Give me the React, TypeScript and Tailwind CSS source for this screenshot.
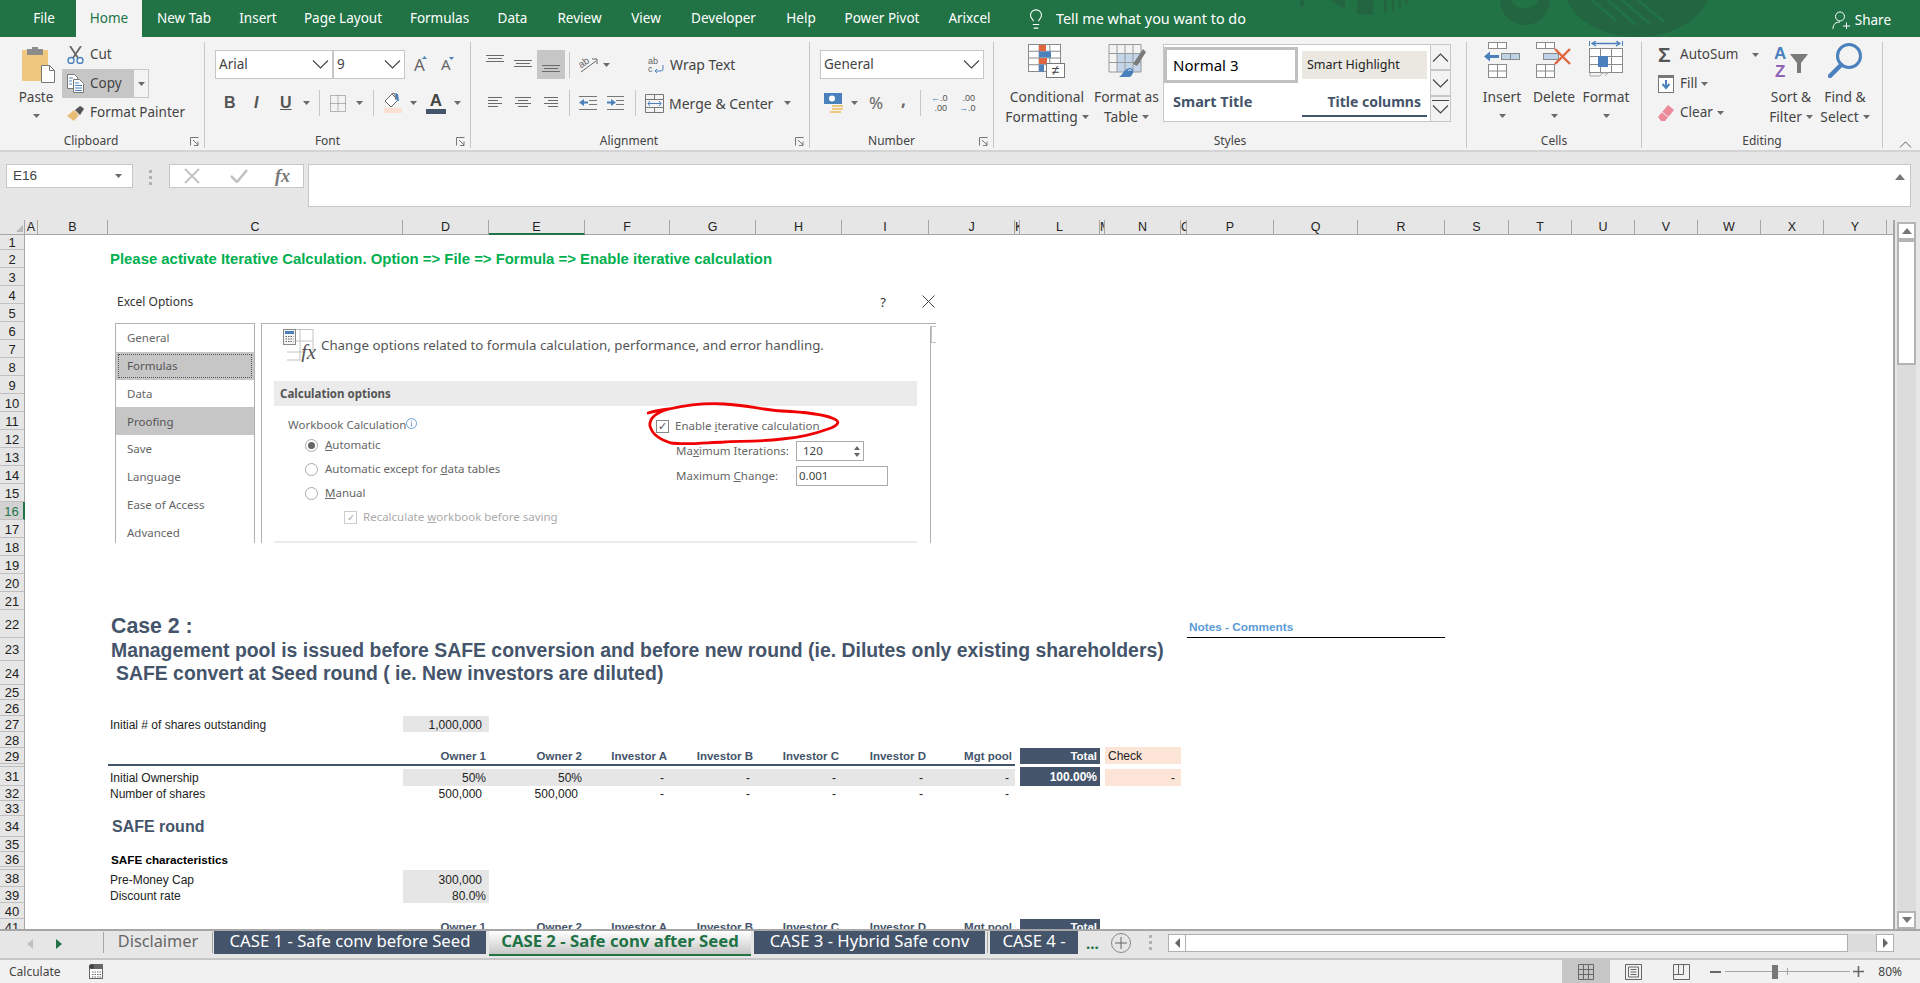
import React from "react";
import { Lightbulb } from "lucide-react";

const ui = "font-['Noto_Sans','Open_Sans',sans-serif]";
const arial = "font-['Liberation_Sans',Arial,sans-serif]";

// --- small drawing helpers

function Caret({ className = "" }: { className?: string }) {
  return (
    <svg width="7" height="4" viewBox="0 0 7 4" className={`shrink-0 ${className}`}>
      <path d="M0 0h7L3.5 4z" fill="#6a6a6a" />
    </svg>
  );
}

function Chevron({ up = false }: { up?: boolean }) {
  return (
    <svg width="17" height="9" viewBox="0 0 17 9" className="shrink-0">
      <path d={up ? "M1 8.5 8.5 1 16 8.5" : "M1 .5 8.5 8 16 .5"} fill="none" stroke="#444" strokeWidth="1.1" />
    </svg>
  );
}

function Launcher() {
  return (
    <svg width="10" height="9" viewBox="0 0 10 9" className="absolute bottom-[2px] right-[4px]">
      <path d="M.5 8.5v-8h8M3 3l5 5M8 4.5v4H4" fill="none" stroke="#777" />
    </svg>
  );
}

function Lines({ w, rows, align = "left" }: { w: number; rows: number[]; align?: string }) {
  return (
    <svg width={w} height={rows.length * 3 + 1} viewBox={`0 0 ${w} ${rows.length * 3 + 1}`} className="shrink-0">
      {rows.map((len, i) => {
        const x = align === "left" ? 0 : align === "right" ? w - len : (w - len) / 2;
        return <rect key={i} x={x} y={i * 3} width={len} height="1" fill="#6a6a6a" />;
      })}
    </svg>
  );
}

function PasteIcon() {
  return (
    <svg width="33" height="36" viewBox="0 0 33 36">
      <rect x="0" y="3" width="26" height="31" rx="1" fill="#edc87e" />
      <rect x="5" y="2" width="16" height="6" fill="#8c8c8c" />
      <rect x="10" y="0" width="6" height="4" fill="#8c8c8c" />
      <path d="M19.500 18.500h8l5 5v12h-13z" fill="#fff" stroke="#777" />
      <path d="M27.500 18.500v5h5" fill="none" stroke="#777" />
    </svg>
  );
}

function ScissorsIcon() {
  return (
    <svg width="17" height="18" viewBox="0 0 17 18">
      <path d="M3 0l8 12M14 0 6 12" stroke="#666" strokeWidth="1.800" fill="none" />
      <circle cx="4" cy="14.500" r="3" fill="none" stroke="#4a81bd" strokeWidth="1.400" />
      <circle cx="13" cy="14.500" r="3" fill="none" stroke="#4a81bd" strokeWidth="1.400" />
    </svg>
  );
}

function CopyIcon() {
  return (
    <svg width="17" height="19" viewBox="0 0 17 19">
      <path d="M.5.5h7l3 3v11H.500z" fill="#fff" stroke="#777" />
      <path d="M6.500 5.500h6l4 4v9h-10z" fill="#fff" stroke="#777" />
      <path d="M2 4h4M2 7h3M2 10h3M8 9h4M8 11.500h7M8 14h7M8 16.500h7" stroke="#4a81bd" />
    </svg>
  );
}

function BrushIcon() {
  return (
    <svg width="18" height="16" viewBox="0 0 18 16">
      <path d="M0 11 7 5l5 5-5 6z" fill="#e8bd75" />
      <path d="M8 5l5-4 2 1 2 2-4 6z" fill="#555" />
    </svg>
  );
}

function TableGrid({ x, y, w, h, cols, rows, stroke = "#8a8a8a" }: { x: number; y: number; w: number; h: number; cols: number; rows: number; stroke?: string }) {
  const parts: React.ReactNode[] = [];
  for (let i = 1; i < cols; i++) {
    parts.push(<path key={`c${i}`} d={`M${x + (w * i) / cols} ${y}v${h}`} stroke={stroke} />);
  }
  for (let i = 1; i < rows; i++) {
    parts.push(<path key={`r${i}`} d={`M${x} ${y + (h * i) / rows}h${w}`} stroke={stroke} />);
  }
  return (
    <g>
      <rect x={x} y={y} width={w} height={h} fill="#fff" stroke={stroke} />
      {parts}
    </g>
  );
}

function InsertIcon() {
  return (
    <svg width="36" height="36" viewBox="0 0 36 36">
      <TableGrid x={4.500} y={.500} w={18} h={6} cols={2} rows={1} />
      <rect x="17.500" y="11.500" width="18" height="6" fill="#bfd3e8" stroke="#8a8a8a" />
      <path d="M26.500 11.500v6" stroke="#8a8a8a" />
      <path d="M0 14.500 6 9.500v3.500h9v3H6v3.500z" fill="#4a81bd" />
      <TableGrid x={4.500} y={22.500} w={18} h={13} cols={2} rows={2} />
    </svg>
  );
}

function DeleteIcon() {
  return (
    <svg width="36" height="36" viewBox="0 0 36 36">
      <TableGrid x={.500} y={.500} w={18} h={6} cols={2} rows={1} />
      <rect x="7.500" y="11.500" width="15" height="6" fill="#bfd3e8" stroke="#8a8a8a" />
      <TableGrid x={.500} y={22.500} w={18} h={13} cols={2} rows={2} />
      <path d="M19 7l15 15M34 7 19 22" stroke="#e0663f" strokeWidth="2.400" />
    </svg>
  );
}

function FormatIcon() {
  return (
    <svg width="35" height="37" viewBox="0 0 35 37">
      <path d="M.5 0v5M33.500 0v5" stroke="#4a81bd" />
      <path d="M3 2.500h28M7 0 3 2.500 7 5M27 0l4 2.500L27 5" stroke="#4a81bd" fill="none" strokeWidth="1.300" />
      <TableGrid x={.500} y={7.500} w={33} h={24} cols={3} rows={3} />
      <rect x="9" y="15" width="10" height="11" fill="#4a81bd" />
      <path d="M1 32v3h10l2-3h6l-3 3" fill="none" stroke="#aaa" />
    </svg>
  );
}

function ConditionalIcon() {
  return (
    <svg width="38" height="34" viewBox="0 0 38 34">
      <TableGrid x={.500} y={.500} w={32} h={27} cols={3} rows={4} />
      <rect x="11" y="1" width="7" height="6" fill="#e0663f" />
      <rect x="11" y="7.500" width="12" height="6" fill="#4a81bd" />
      <rect x="11" y="14" width="8" height="6" fill="#e0663f" />
      <rect x="11" y="20.500" width="5" height="7" fill="#4a81bd" />
      <rect x="18.500" y="19.500" width="18" height="14" fill="#fff" stroke="#777" />
      <text x="27.500" y="31" textAnchor="middle" fontSize="14" fill="#444" fontFamily="Liberation Sans">≠</text>
    </svg>
  );
}

function FormatTableIcon() {
  return (
    <svg width="38" height="34" viewBox="0 0 38 34">
      <rect x="9" y="9" width="24" height="19" fill="#c3d5e9" />
      <path d="M1 .5h32v27.500H1zM9 .5v27.500M17 .5v27.500M25 .5v27.500M1 9.500h32M1 18.500h32" fill="none" stroke="#9a9a9a" />
      <path d="M25 20 35 5l3 3-9 14z" fill="#7a7a7a" />
      <path d="M11 33c3-1 5-8 10-9 3 0 5 2 4 5-1 2-2 4-4 4z" fill="#4a81bd" />
      <path d="M20 27c1-2 3-2 3 0" fill="none" stroke="#fff" />
    </svg>
  );
}

function SortIcon() {
  return (
    <svg width="35" height="33" viewBox="0 0 35 33">
      <text x="0" y="14" fontSize="17" fontWeight="700" fill="#4a81bd" fontFamily="Liberation Sans">A</text>
      <text x="1" y="32" fontSize="17" fontWeight="700" fill="#8e62b5" fontFamily="Liberation Sans">Z</text>
      <path d="M16 9h18l-7 9v10h-4V18z" fill="#7a7a7a" />
    </svg>
  );
}

function FindIcon() {
  return (
    <svg width="35" height="35" viewBox="0 0 35 35">
      <circle cx="21" cy="13" r="11.500" fill="none" stroke="#4a81bd" strokeWidth="3" />
      <path d="M13 22 2 33" stroke="#4a81bd" strokeWidth="4.500" strokeLinecap="round" />
    </svg>
  );
}

function CalcIcon() {
  return (
    <svg width="33" height="33" viewBox="0 0 33 33">
      <path d="M4 .5h26M4 12h26M4 23h18M4 31h14M17 0v31M30 0v22" stroke="#c4c4c4" fill="none" />
      <rect x=".5" y=".5" width="12" height="15" fill="#f4f4f4" stroke="#888" />
      <rect x="2" y="2" width="9" height="3" fill="#4a81bd" />
      <path d="M2.500 7.500h8M2.500 10h8M2.500 12.500h8" stroke="#666" strokeDasharray="1.500 1" />
      <text x="18" y="30" fontSize="21" fontStyle="italic" fill="#555" fontFamily="Liberation Serif">fx</text>
    </svg>
  );
}

function ValueDash() {
  return <span className="pr-[6px]">-</span>;
}

// --- data

const menuTabs = [
  { label: "File", w: "w-[64px] ml-[12px]" },
  { label: "Home", w: "w-[66px]", active: true },
  { label: "New Tab", w: "w-[84px]" },
  { label: "Insert", w: "w-[64px]" },
  { label: "Page Layout", w: "w-[106px]" },
  { label: "Formulas", w: "w-[87px]" },
  { label: "Data", w: "w-[59px]" },
  { label: "Review", w: "w-[75px]" },
  { label: "View", w: "w-[58px]" },
  { label: "Developer", w: "w-[97px]" },
  { label: "Help", w: "w-[58px]" },
  { label: "Power Pivot", w: "w-[104px]" },
  { label: "Arixcel", w: "w-[71px]" },
];

const columns = [
  { l: "A", c: "col-start-2" },
  { l: "B", c: "col-start-3" },
  { l: "C", c: "col-start-4" },
  { l: "D", c: "col-start-5" },
  { l: "E", c: "col-start-6 bg-[#d2d2d2] border-b-2 border-b-[#217346]" },
  { l: "F", c: "col-start-7" },
  { l: "G", c: "col-start-8" },
  { l: "H", c: "col-start-9" },
  { l: "I", c: "col-start-10" },
  { l: "J", c: "col-start-11" },
  { l: "K", c: "col-start-12 justify-start" },
  { l: "L", c: "col-start-13" },
  { l: "M", c: "col-start-14 justify-start" },
  { l: "N", c: "col-start-15" },
  { l: "O", c: "col-start-16 justify-start" },
  { l: "P", c: "col-start-17" },
  { l: "Q", c: "col-start-18" },
  { l: "R", c: "col-start-19" },
  { l: "S", c: "col-start-20" },
  { l: "T", c: "col-start-21" },
  { l: "U", c: "col-start-22" },
  { l: "V", c: "col-start-23" },
  { l: "W", c: "col-start-24" },
  { l: "X", c: "col-start-25" },
  { l: "Y", c: "col-start-26" },
];

const rowCount = 41;

const headerCols = [
  { t: "Owner 1", c: "col-start-5" },
  { t: "Owner 2", c: "col-start-6" },
  { t: "Investor A", c: "col-start-7" },
  { t: "Investor B", c: "col-start-8" },
  { t: "Investor C", c: "col-start-9" },
  { t: "Investor D", c: "col-start-10" },
  { t: "Mgt pool", c: "col-start-11" },
];

const dashCols = ["col-start-7", "col-start-8", "col-start-9", "col-start-10", "col-start-11"];

const navItems = [
  { t: "General" },
  { t: "Formulas", focus: true },
  { t: "Data" },
  { t: "Proofing", hover: true },
  { t: "Save" },
  { t: "Language" },
  { t: "Ease of Access" },
  { t: "Advanced" },
];

// --- top parts

function TitleBar() {
  return (
    <div className="relative h-[37px] shrink-0 overflow-hidden bg-[#217346] text-[13.5px] text-white">
      <svg width="520" height="37" viewBox="0 0 520 37" className="absolute right-[100px] top-0">
        <g fill="#236541">
          <path d="M30 0l15 9V0zM57 0h16v15l-16-1zM84 0h3v13h-3zM92 0h2v11h-2zM99 0h2v8h-2zM105 0h3v4h-3zM0 0h4v7H0z" />
          <path fillRule="evenodd" d="M200 0a25 25 0 0 0 50 0h-12a13 8 0 0 1-26 0z" />
          <path d="M267 0c8 20 35 37 70 37s62-17 71-37z" />
        </g>
        <path d="M292 0l24 21M308 0l28 25M322 0l28 24M338 0l26 22" stroke="#217346" strokeWidth="2.500" />
      </svg>
      <div className="relative flex h-full items-stretch">
        {menuTabs.map((t) => (
          <div
            key={t.label}
            className={`flex items-center justify-center ${t.w} ${t.active ? "bg-[#f3f3f3] text-[#217346]" : ""}`}
          >
            {t.label}
          </div>
        ))}
        <Lightbulb className="ml-[20px] mt-[8px] h-[22px] w-[22px]" strokeWidth={1.200} />
        <span className="ml-[9px] flex items-center text-[14.4px]">Tell me what you want to do</span>
        <div className="ml-auto mr-[29px] flex items-center gap-[5px] pt-[3px]">
          <svg width="18" height="18" viewBox="0 0 18 18">
            <circle cx="8" cy="5.500" r="4.500" fill="none" stroke="#fff" />
            <path d="M1 18c0-5 3-7 7-7M11 15h7M14.500 11.500v7" fill="none" stroke="#fff" />
          </svg>
          <span>Share</span>
        </div>
      </div>
    </div>
  );
}

function RibbonGroup({ label, w, labelPad = "", launcher = false, children }: { label: string; w: string; labelPad?: string; launcher?: boolean; children: React.ReactNode }) {
  return (
    <div className={`relative flex h-[106px] shrink-0 flex-col border-r border-[#c6c6c6] ${w}`}>
      <div className="flex-1">{children}</div>
      <div className={`h-[14px] text-center text-[12px] leading-[14px] text-[#444] ${labelPad}`}>{label}</div>
      {launcher && <Launcher />}
    </div>
  );
}

function BigButton({ lines, w, icon, stack = false }: { lines: string[]; w: string; icon: React.ReactNode; stack?: boolean }) {
  return (
    <div className={`flex flex-col items-center text-[13.8px] ${w}`}>
      <div className="flex h-[40px] items-end justify-center pb-[4px]">{icon}</div>
      <div className="mt-[5px] flex h-[20px] items-center whitespace-nowrap leading-[20px]">{lines[0]}</div>
      {stack ? (
        <div className="flex h-[18px] items-center">
          <Caret />
        </div>
      ) : (
        <div className="flex h-[20px] items-center gap-[4px] whitespace-nowrap leading-[20px]">
          {lines[1]}
          <Caret />
        </div>
      )}
    </div>
  );
}

function Select({ value, w }: { value: string; w: string }) {
  return (
    <div className={`flex h-[29px] items-center justify-between border border-[#c6c6c6] bg-white pl-[3px] pr-[3px] text-[13.5px] ${w}`}>
      <span>{value}</span>
      <Chevron />
    </div>
  );
}

function Ribbon() {
  return (
    <div className={`flex h-[115px] shrink-0 items-start border-b-2 border-[#d4d4d4] bg-[#f3f3f3] pt-[5px] text-[13.5px] text-[#444]`}>
      <RibbonGroup label="Clipboard" w="w-[205px]" launcher labelPad="pr-[22px]">
        <div className="flex">
          <div className="ml-[22px] flex w-[33px] flex-col items-center pt-[5px]">
            <PasteIcon />
            <div className="mr-[5px] mt-[5px] leading-[18px]">Paste</div>
            <Caret className="mr-[5px] mt-[8px]" />
          </div>
          <div className="-mt-[2px] ml-[7px] flex flex-col">
            <div className="flex h-[29px] items-center pl-[5px]">
              <ScissorsIcon />
              <span className="ml-[6px]">Cut</span>
            </div>
            <div className="flex h-[29px]">
              <div className="flex w-[72px] items-center bg-[#c6c6c6] pl-[5px]">
                <CopyIcon />
                <span className="ml-[6px]">Copy</span>
              </div>
              <div className="flex w-[15px] items-center justify-center border border-l-0 border-[#c6c6c6]">
                <Caret />
              </div>
            </div>
            <div className="flex h-[29px] items-center pl-[5px]">
              <BrushIcon />
              <span className="ml-[5px] whitespace-nowrap">Format Painter</span>
            </div>
          </div>
        </div>
      </RibbonGroup>

      <RibbonGroup label="Font" w="w-[266px]" launcher labelPad="pr-[20px]">
        <div className="ml-[10px] mt-[8px] flex items-center">
          <Select value="Arial" w="w-[118px]" />
          <Select value="9" w="w-[72px]" />
          <div className="ml-[9px] flex w-[15px] items-start text-[17px] leading-none text-[#666]">
            A<svg width="5" height="3" viewBox="0 0 5 3" className="-ml-[3px] shrink-0"><path d="M2.500 0 5 3H0z" fill="#4a81bd" /></svg>
          </div>
          <div className="ml-[12px] flex w-[14px] items-start text-[15px] leading-none text-[#666]">
            A<svg width="5" height="3" viewBox="0 0 5 3" className="-ml-[2px] shrink-0"><path d="M0 0h5L2.500 3z" fill="#4a81bd" /></svg>
          </div>
        </div>
        <div className={`ml-[10px] mt-[9px] flex h-[30px] items-center text-[16px] text-[#555] ${arial}`}>
          <b className="ml-[9px] w-[10px]">B</b>
          <i className="ml-[20px] w-[8px] font-bold">I</i>
          <u className="ml-[18px] w-[10px] font-bold">U</u>
          <Caret className="ml-[13px]" />
          <div className="ml-[9px] h-[26px] w-px bg-[#c6c6c6]" />
          <svg width="16" height="17" viewBox="0 0 16 17" className="ml-[10px] shrink-0">
            <path d="M.5.5h15v16H.5zM8 .5v16M.5 8.500h15" fill="none" stroke="#777" strokeDasharray="1 1" />
          </svg>
          <Caret className="ml-[10px]" />
          <div className="ml-[10px] h-[26px] w-px bg-[#c6c6c6]" />
          <svg width="18" height="20" viewBox="0 0 18 20" className="ml-[10px] shrink-0">
            <path d="M8 1 1 8l6 6 7-7zM8 1l2-1 1 2 1 5" fill="#fff" stroke="#666" />
            <path d="M11 0l3 1 1 7h-2z" fill="#4a81bd" />
            <rect x="0" y="15" width="18" height="5" fill="#fbe0d3" />
          </svg>
          <Caret className="ml-[8px]" />
          <div className="ml-[9px] flex w-[20px] flex-col items-center">
            <b className="text-[17px] leading-[15px] text-[#444]">A</b>
            <div className="mt-[1px] h-[5px] w-[20px] bg-[#44546a]" />
          </div>
          <Caret className="ml-[8px]" />
        </div>
      </RibbonGroup>

      <RibbonGroup label="Alignment" w="w-[339px]" launcher labelPad="pr-[22px]">
        <div className="mt-[8px] flex h-[29px] items-center">
          <div className="ml-[15px] self-start pt-[5px]"><Lines w={18} rows={[18, 14, 18]} align="center" /></div>
          <div className="ml-[10px]"><Lines w={18} rows={[18, 14, 18]} align="center" /></div>
          <div className="ml-[5px] flex h-[29px] w-[28px] items-end justify-center bg-[#c6c6c6] pb-[4px]"><Lines w={18} rows={[18, 14, 18]} align="center" /></div>
          <div className="ml-[4px] h-[26px] w-px bg-[#c6c6c6]" />
          <svg width="19" height="17" viewBox="0 0 19 17" className="ml-[9px] shrink-0">
            <text x="0" y="10" fontSize="10" fill="#666" fontFamily="Liberation Sans" transform="rotate(-35 5 8)">ab</text>
            <path d="M2 16 17 5M13 3h5v5" stroke="#666" fill="none" />
          </svg>
          <Caret className="ml-[5px]" />
          <svg width="17" height="16" viewBox="0 0 17 16" className="ml-[38px] shrink-0">
            <text x="0" y="7" fontSize="9" fill="#666" fontFamily="Liberation Sans">ab</text>
            <text x="0" y="15" fontSize="9" fill="#666" fontFamily="Liberation Sans">c</text>
            <path d="M15 8v4a2 2 0 0 1-2 2H7M9 12l-2 2 2 2" fill="none" stroke="#4a81bd" />
          </svg>
          <span className="ml-[5px] whitespace-nowrap text-[14px]">Wrap Text</span>
        </div>
        <div className="mt-[9px] flex h-[30px] items-center">
          <div className="ml-[17px]"><Lines w={14} rows={[14, 10, 14, 10]} /></div>
          <div className="ml-[13px]"><Lines w={16} rows={[16, 10, 16, 10]} align="center" /></div>
          <div className="ml-[13px]"><Lines w={14} rows={[14, 10, 14, 10]} align="right" /></div>
          <div className="ml-[11px] h-[26px] w-px bg-[#c6c6c6]" />
          <svg width="18" height="14" viewBox="0 0 18 14" className="ml-[9px] shrink-0">
            <path d="M0 .5h18M10 4.500h8M10 8.500h8M0 13.500h18" stroke="#777" />
            <path d="M0 6.500 5 3v2.500h4v2H5V10z" fill="#4a81bd" />
          </svg>
          <svg width="17" height="14" viewBox="0 0 17 14" className="ml-[10px] shrink-0">
            <path d="M0 .5h17M9 4.500h8M9 8.500h8M0 13.500h17" stroke="#777" />
            <path d="M9 6.500 4 3v2.500H0v2h4V10z" fill="#4a81bd" />
          </svg>
          <div className="ml-[11px] h-[26px] w-px bg-[#c6c6c6]" />
          <svg width="19" height="19" viewBox="0 0 19 19" className="ml-[9px] shrink-0">
            <path d="M.5.5h18v18H.5zM.5 5.500h18M.5 13.500h18M9.500.5v5M9.500 13.500v5" fill="none" stroke="#777" />
            <path d="M3 9.500h13M5 7 3 9.500 5 12M14 7l2 2.500-2 2.500" fill="none" stroke="#4a81bd" />
          </svg>
          <span className="ml-[5px] w-[112px] whitespace-nowrap text-[14px]">Merge &amp; Center</span>
          <Caret className="ml-[3px]" />
        </div>
      </RibbonGroup>

      <RibbonGroup label="Number" w="w-[184px]" launcher labelPad="pr-[20px]">
        <div className="ml-[10px] mt-[8px] flex">
          <Select value="General" w="w-[164px]" />
        </div>
        <div className="mt-[9px] flex h-[30px] items-center">
          <svg width="20" height="20" viewBox="0 0 20 20" className="ml-[14px] shrink-0">
            <rect x="0" y="0" width="18" height="11" fill="#4a81bd" />
            <circle cx="8" cy="5.500" r="3" fill="#fff" />
            <path d="M8 12h11v2H8zM8 15h11v2H8zM6 18h11v2H6z" fill="#edc87e" />
          </svg>
          <Caret className="ml-[7px]" />
          <span className="ml-[11px] w-[16px] text-[17px] text-[#666]">%</span>
          <b className="ml-[16px] -mt-[8px] w-[4px] text-[17px] leading-[15px] text-[#666]">,</b>
          <div className="ml-[15px] h-[26px] w-px bg-[#c6c6c6]" />
          <div className={`ml-[10px] flex w-[16px] flex-col text-right text-[9px] leading-[10px] text-[#555] ${arial}`}>
            <span><span className="text-[#4a81bd]">←</span>.0</span>
            <span>.00</span>
          </div>
          <div className={`ml-[12px] flex w-[16px] flex-col text-right text-[9px] leading-[10px] text-[#555] ${arial}`}>
            <span>.00</span>
            <span><span className="text-[#4a81bd]">→</span>.0</span>
          </div>
        </div>
      </RibbonGroup>

      <RibbonGroup label="Styles" w="w-[473px]">
        <div className="flex">
          <div className="ml-[8px] flex">
            <BigButton lines={["Conditional", "Formatting"]} w="w-[90px]" icon={<ConditionalIcon />} />
            <BigButton lines={["Format as", "Table"]} w="w-[69px]" icon={<FormatTableIcon />} />
          </div>
          <div className="ml-[2px] mt-[2px] flex h-[78px]">
            <div className="w-[268px] border border-[#c6c6c6] bg-white">
              <div className="flex h-[38px] pt-[2px]">
                <div className="flex h-[36px] w-[134px] items-center border-[3px] border-[#c0c0c0] bg-white pl-[6px] text-[15px] text-black">Normal 3</div>
                <div className="ml-[4px] mt-[4px] flex h-[28px] w-[125px] items-center bg-[#ebe8e1] pl-[5px] text-[12.5px] text-[#222]">Smart Highlight</div>
              </div>
              <div className="flex h-[38px] items-center font-bold text-[#44546a]">
                <div className="w-[138px] pl-[9px] text-[14.5px]">Smart Title</div>
                <div className="flex h-[30px] w-[125px] items-center justify-end border-b-2 border-[#44546a] pr-[6px] text-[14px]">Title columns</div>
              </div>
            </div>
            <div className="flex w-[20px] flex-col border border-l-0 border-[#c6c6c6] bg-[#f3f3f3]">
              <div className="flex h-[26px] items-center justify-center border-b-2 border-[#c6c6c6]"><Chevron up /></div>
              <div className="flex h-[24px] items-center justify-center"><Chevron /></div>
              <div className="flex flex-1 flex-col items-center gap-[4px] border-t-2 border-[#c6c6c6] pt-[3px]">
                <div className="h-px w-[17px] bg-[#444]" />
                <Chevron />
              </div>
            </div>
          </div>
        </div>
      </RibbonGroup>

      <RibbonGroup label="Cells" w="w-[175px]">
        <div className="ml-[9px] flex">
          <BigButton lines={["Insert"]} w="w-[52px]" icon={<InsertIcon />} stack />
          <BigButton lines={["Delete"]} w="w-[52px]" icon={<DeleteIcon />} stack />
          <BigButton lines={["Format"]} w="w-[52px]" icon={<FormatIcon />} stack />
        </div>
      </RibbonGroup>

      <RibbonGroup label="Editing" w="w-[241px]">
        <div className="flex">
          <div className="-mt-[2px] ml-[16px] flex w-[106px] flex-col">
            <div className="flex h-[29px] items-center">
              <span className={`w-[22px] text-[21px] font-bold leading-none text-[#555] ${arial}`}>Σ</span>
              <span>AutoSum</span>
              <Caret className="ml-[14px]" />
            </div>
            <div className="flex h-[29px] items-center">
              <svg width="16" height="18" viewBox="0 0 16 18" className="mr-[6px] shrink-0">
                <rect x=".5" y=".5" width="15" height="17" fill="#fff" stroke="#777" />
                <rect x="0" y="0" width="16" height="3" fill="#777" />
                <path d="M8 5v7M4.500 9 8 13l3.500-4" fill="none" stroke="#4a81bd" strokeWidth="2" />
              </svg>
              <span>Fill</span>
              <Caret className="ml-[4px]" />
            </div>
            <div className="flex h-[29px] items-center">
              <svg width="16" height="16" viewBox="0 0 16 16" className="mr-[6px] shrink-0">
                <path d="M10 0l6 5-9 11H3l-3-4z" fill="#ec8a9a" />
                <path d="M4 7l6 5" stroke="#f3f3f3" />
              </svg>
              <span>Clear</span>
              <Caret className="ml-[4px]" />
            </div>
          </div>
          <BigButton lines={["Sort &", "Filter"]} w="w-[54px]" icon={<SortIcon />} />
          <BigButton lines={["Find &", "Select"]} w="w-[54px]" icon={<FindIcon />} />
        </div>
      </RibbonGroup>

      <div className="ml-[14px] mt-[98px] scale-75"><Chevron up /></div>
    </div>
  );
}

function FormulaBar() {
  return (
    <div className="flex h-[68px] shrink-0 items-start bg-[#e6e6e6] pt-[12px] text-[13.5px] text-[#444]">
      <div className={`ml-[6px] flex h-[24px] w-[127px] items-center justify-between border border-[#c6c6c6] bg-white pl-[6px] pr-[10px] ${arial}`}>
        <span>E16</span>
        <Caret />
      </div>
      <div className="ml-[16px] mt-[6px] flex flex-col gap-[3px]">
        <div className="h-[3px] w-[3px] bg-[#b0b0b0]" />
        <div className="h-[3px] w-[3px] bg-[#b0b0b0]" />
        <div className="h-[3px] w-[3px] bg-[#b0b0b0]" />
      </div>
      <div className="ml-[17px] flex h-[24px] w-[135px] items-center border border-[#c6c6c6] bg-white">
        <svg width="16" height="16" viewBox="0 0 16 16" className="ml-[14px]">
          <path d="M1 1l14 14M15 1 1 15" stroke="#c2c2c2" strokeWidth="1.800" />
        </svg>
        <svg width="18" height="14" viewBox="0 0 18 14" className="ml-[30px]">
          <path d="M1 7l6 6L17 1" fill="none" stroke="#c2c2c2" strokeWidth="2.600" />
        </svg>
        <span className="ml-[27px] font-['Liberation_Serif',serif] text-[18px] font-bold italic text-[#777]">fx</span>
      </div>
      <div className="relative ml-[4px] h-[43px] w-[1603px] border border-[#c6c6c6] bg-white">
        <svg width="10" height="6" viewBox="0 0 10 6" className="absolute right-[5px] top-[9px]">
          <path d="M5 0l5 6H0z" fill="#777" />
        </svg>
      </div>
    </div>
  );
}

// --- sheet

function ExcelOptionsPicture() {
  return (
    <div className={`absolute left-[115px] top-[71px] w-[821px] text-[11.5px] text-[#666] ${ui}`}>
      <div className="flex h-[32px] items-start pt-[2px] text-[#333]">
        <span className="ml-[2px] text-[12px]">Excel Options</span>
        <span className="ml-auto text-[13px]">?</span>
        <svg width="13" height="13" viewBox="0 0 13 13" className="ml-[36px] mr-[1px] mt-[2px]">
          <path d="M.5.5l12 12M12.500.5l-12 12" stroke="#444" />
        </svg>
      </div>
      <div className="flex h-[220px] gap-[6px]">
        <div className="h-full w-[140px] border-x border-t border-[#b0b0b0] bg-white">
          {navItems.map((n) => (
            <div
              key={n.t}
              className={`flex h-[27.800px] items-center pl-[11px] ${n.hover ? "bg-[#c6c6c6] text-[#555]" : ""} ${n.focus ? "bg-[#c6c6c6] text-[#555] outline-1 -outline-offset-3 outline-dotted outline-[#555]" : ""}`}
            >
              {n.t}
            </div>
          ))}
        </div>
        <div className="relative flex h-full flex-1 flex-col border-l border-t border-[#b0b0b0] bg-white">
          <div className="absolute bottom-0 right-[5px] top-[2px] w-px bg-[#b0b0b0]" />
          <div className="absolute right-0 top-[2px] h-[17px] w-[5px] border border-r-0 border-[#c6c6c6]" />
          <div className="ml-[21px] mt-[5px] flex h-[33px] items-center">
            <CalcIcon />
            <span className="ml-[5px] text-[13.3px] text-[#555]">Change options related to formula calculation, performance, and error handling.</span>
          </div>
          <div className="ml-[12px] mt-[19px] flex h-[25px] w-[643px] items-center bg-[#ebebeb] pl-[6px] font-bold text-[#555]">Calculation options</div>
          <div className="relative flex flex-1">
            <div className="ml-[26px] mt-[11px] w-[368px]">
              <div className="flex h-[16px] items-center">
                Workbook Calculation
                <svg width="11" height="11" viewBox="0 0 11 11" className="mb-[4px]">
                  <circle cx="5.500" cy="5.500" r="5" fill="none" stroke="#6ea3d8" />
                  <path d="M5.500 4.500v4M5.500 2.500v1" stroke="#6ea3d8" />
                </svg>
              </div>
              <div className="ml-[17px] flex h-[24px] items-center gap-[7px]">
                <div className="flex h-[13px] w-[13px] items-center justify-center rounded-full border border-[#aaa]">
                  <div className="h-[7px] w-[7px] rounded-full bg-[#666]" />
                </div>
                <span><u>A</u>utomatic</span>
              </div>
              <div className="ml-[17px] flex h-[24px] items-center gap-[7px]">
                <div className="h-[13px] w-[13px] rounded-full border border-[#aaa]" />
                <span>Automatic except for <u>d</u>ata tables</span>
              </div>
              <div className="ml-[17px] flex h-[24px] items-center gap-[7px]">
                <div className="h-[13px] w-[13px] rounded-full border border-[#aaa]" />
                <span><u>M</u>anual</span>
              </div>
              <div className="ml-[56px] flex h-[24px] items-center gap-[6px] text-[#aaa]">
                <div className="flex h-[13px] w-[13px] items-center justify-center border border-[#ccc] text-[10px] text-[#aaa]">✓</div>
                <span>Recalculate <u>w</u>orkbook before saving</span>
              </div>
            </div>
            <div className="mt-[11px]">
              <div className="flex h-[18px] items-center gap-[6px]">
                <div className="flex h-[13px] w-[13px] items-center justify-center border border-[#888] text-[11px] text-[#555]">✓</div>
                <span>Enable <u>i</u>terative calculation</span>
              </div>
              <div className="ml-[20px] mt-[6px] flex h-[20px] items-center">
                <span className="w-[120px]">Ma<u>x</u>imum Iterations:</span>
                <div className="flex h-[20px] w-[68px] items-center justify-between border border-[#aaa] pl-[6px] pr-[3px] text-[#444]">
                  120
                  <div className="flex flex-col gap-[3px]">
                    <svg width="6" height="4" viewBox="0 0 6 4"><path d="M3 0l3 4H0z" fill="#666" /></svg>
                    <svg width="6" height="4" viewBox="0 0 6 4"><path d="M0 0h6L3 4z" fill="#666" /></svg>
                  </div>
                </div>
              </div>
              <div className="ml-[20px] mt-[5px] flex h-[20px] items-center">
                <span className="w-[120px]">Maximum <u>C</u>hange:</span>
                <div className="flex h-[20px] w-[92px] items-center border border-[#aaa] pl-[2px] text-[#444]">0.001</div>
              </div>
            </div>
          </div>
          <div className="ml-[12px] h-[2px] w-[643px] bg-[#ebebeb]" />
          <svg width="200" height="44" viewBox="0 0 200 44" className="absolute left-[385px] top-[78px]" fill="none">
            <path
              d="M1 11 C8 9 14 8 22 7 C40 3 60 1 77 2 C100 3 115 8 135 9 C155 10 175 12 185 16 C193 19 193 22 184 26 C165 33 150 36 135 37 C110 40 90 39 77 40 C55 41 38 43 24 41 C14 38 5 32 3 24 C2 17 8 11 22 7"
              stroke="#f00000"
              strokeWidth="2.800"
              strokeLinecap="round"
            />
          </svg>
        </div>
      </div>
    </div>
  );
}

function Sheet() {
  const label = `flex items-center whitespace-nowrap text-[12px] text-[#222] ${arial}`;
  const head = `flex items-center justify-end whitespace-nowrap pr-[3px] pt-[2px] text-[11.5px] font-bold text-[#44546a] ${arial}`;
  const num = `flex items-center justify-end whitespace-nowrap text-[12px] text-[#222] ${arial}`;

  return (
    <div className="flex h-[709px] shrink-0 bg-[#e6e6e6]">
      <div className={`relative grid h-full w-[1895px] shrink-0 grid-cols-[25px_13px_70px_295px_86px_96px_85px_86px_86px_87px_86px_5px_80px_5px_76px_6px_87px_84px_87px_64px_63px_63px_63px_63px_63px_63px_8px] grid-rows-[15px_15px_18px_18px_18px_18px_18px_18px_18px_18px_18px_18px_18px_18px_18px_18px_18px_18px_18px_18px_18px_18px_28px_23px_24px_15px_16px_16px_16px_16px_3px_19px_15px_15px_21px_15px_15px_3px_17px_16px_16px_16px] overflow-hidden border-r-2 border-[#a6a6a6] bg-white ${arial}`}>
        {/* column headers */}
        <div className="col-start-1 row-start-1 flex items-end border-b border-r border-[#a6a6a6] bg-[#e6e6e6] pb-[2px] pl-[16px]">
          <svg width="7" height="7" viewBox="0 0 7 7"><path d="M7 0v7H0z" fill="#b8b8b8" /></svg>
        </div>
        {columns.map((col) => (
          <div
            key={col.l}
            className={`row-start-1 flex items-center justify-center overflow-hidden border-b border-r border-[#a6a6a6] bg-[#e6e6e6] pt-[1px] text-[12.5px] leading-none text-[#222] ${col.c}`}
          >
            {col.l}
          </div>
        ))}
        <div className="col-start-27 row-start-1 border-b border-[#a6a6a6] bg-[#e6e6e6]" />

        {/* row headers */}
        {Array.from({ length: rowCount }, (_, i) => i + 1).map((n) => {
          const hidden = n === 30 || n === 37;
          return (
            <div
              key={n}
              style={{ gridRowStart: n + 1 }}
              className={`col-start-1 flex items-center justify-center overflow-hidden border-b border-[#c0c0c0] text-[13px] leading-none text-[#222] ${hidden ? "" : "pt-[1px]"} ${n === 16 ? "border-r-2 border-r-[#217346] bg-[#d2d2d2] text-[#217346]" : "border-r border-r-[#a6a6a6] bg-[#e6e6e6]"}`}
            >
              {hidden ? "" : n}
            </div>
          );
        })}

        {/* row 2 */}
        <div className={`col-start-4 row-start-3 flex items-center whitespace-nowrap pl-[2px] pt-[1px] text-[14.9px] font-bold text-[#00b050] ${arial}`}>
          Please activate Iterative Calculation. Option =&gt; File =&gt; Formula =&gt; Enable iterative calculation
        </div>

        {/* case heading */}
        <div className="col-start-4 row-start-23 flex items-end whitespace-nowrap pl-[3px] text-[21.3px] font-bold leading-[23px] text-[#44546a]">Case 2 :</div>
        <div className="col-start-4 row-start-24 flex items-center whitespace-nowrap pl-[3px] pt-[3px] text-[19.4px] font-bold text-[#44546a]">
          Management pool is issued before SAFE conversion and before new round (ie. Dilutes only existing shareholders)
        </div>
        <div className="col-start-4 row-start-25 flex items-center whitespace-nowrap pl-[8px] pt-[2px] text-[19.4px] font-bold text-[#44546a]">
          SAFE convert at Seed round ( ie. New investors are diluted)
        </div>
        <div className="col-start-17 col-end-20 row-start-23 flex items-end border-b border-black pb-[3px] pl-[2px] text-[11.8px] font-bold leading-none text-[#5b9bd5]">
          Notes - Comments
        </div>

        {/* row 27 */}
        <div className={`col-start-4 row-start-28 pl-[2px] pt-[2px] ${label}`}>Initial # of shares outstanding</div>
        <div className={`col-start-5 row-start-28 bg-[#e6e6e6] pr-[7px] pt-[2px] ${num}`}>1,000,000</div>

        {/* row 29 headers */}
        {headerCols.map((h) => (
          <div key={h.t} className={`row-start-30 ${h.c} ${head}`}>{h.t}</div>
        ))}
        <div className={`col-start-13 row-start-30 bg-[#44546a] ${head} !text-white`}>Total</div>
        <div className={`col-start-15 row-start-30 -mt-[1px] bg-[#fce4d6] pl-[3px] ${label}`}>Check</div>
        <div className="col-start-4 col-end-12 row-start-31 border-t-2 border-[#44546a]" />

        {/* row 31 */}
        <div className={`col-start-4 row-start-32 pl-[2px] pt-[2px] ${label}`}>Initial Ownership</div>
        <div className={`col-start-5 row-start-32 mt-[2px] bg-[#e6e6e6] pr-[3px] ${num}`}>50%</div>
        <div className={`col-start-6 row-start-32 mt-[2px] bg-[#e6e6e6] pr-[3px] ${num}`}>50%</div>
        {dashCols.map((c) => (
          <div key={c} className={`row-start-32 mt-[2px] bg-[#e6e6e6] ${c} ${num}`}><ValueDash /></div>
        ))}
        <div className={`col-start-13 row-start-32 bg-[#44546a] pr-[3px] font-bold ${num} !text-white`}>100.00%</div>
        <div className={`col-start-15 row-start-32 mt-[2px] bg-[#fce4d6] ${num}`}><ValueDash /></div>

        {/* row 32 */}
        <div className={`col-start-4 row-start-33 pl-[2px] ${label}`}>Number of shares</div>
        <div className={`col-start-5 row-start-33 pr-[7px] ${num}`}>500,000</div>
        <div className={`col-start-6 row-start-33 pr-[7px] ${num}`}>500,000</div>
        {dashCols.map((c) => (
          <div key={c} className={`row-start-33 ${c} ${num}`}><ValueDash /></div>
        ))}

        {/* SAFE round */}
        <div className="col-start-4 row-start-35 flex items-center whitespace-nowrap pl-[4px] text-[16px] font-bold text-[#44546a]">SAFE round</div>
        <div className={`col-start-4 row-start-37 pl-[3px] pt-[1px] font-bold ${label} !text-[11.7px] !text-black`}>SAFE characteristics</div>

        <div className={`col-start-4 row-start-39 pl-[2px] pt-[2px] ${label}`}>Pre-Money Cap</div>
        <div className={`col-start-5 row-start-39 bg-[#e6e6e6] pr-[7px] pt-[2px] ${num}`}>300,000</div>
        <div className={`col-start-4 row-start-40 pl-[2px] pt-[2px] ${label}`}>Discount rate</div>
        <div className={`col-start-5 row-start-40 bg-[#e6e6e6] pr-[3px] pt-[2px] ${num}`}>80.0%</div>

        {/* row 41, cut by the tab bar */}
        {headerCols.map((h) => (
          <div key={h.t} className={`row-start-42 ${h.c} ${head}`}>{h.t}</div>
        ))}
        <div className={`col-start-13 row-start-42 bg-[#44546a] ${head} !text-white`}>Total</div>

        <ExcelOptionsPicture />
      </div>

      {/* vertical scrollbar */}
      <div className="ml-[2px] flex w-[19px] flex-col">
        <div className="mt-[2px] flex h-[18px] items-center justify-center border-2 border-[#b4b4b4] bg-white">
          <svg width="10" height="6" viewBox="0 0 10 6"><path d="M5 0l5 6H0z" fill="#777" /></svg>
        </div>
        <div className="h-[125px] border-2 border-[#b4b4b4] bg-white" />
        <div className="flex-1 bg-[#dcdcdc]" />
        <div className="flex h-[18px] items-center justify-center border-2 border-[#b4b4b4] bg-white">
          <svg width="10" height="6" viewBox="0 0 10 6"><path d="M0 0h10L5 6z" fill="#777" /></svg>
        </div>
      </div>
    </div>
  );
}

function TabBar() {
  return (
    <div className={`flex h-[29px] shrink-0 items-start border-t-2 border-[#a6a6a6] bg-[#e6e6e6] text-[16.7px] leading-[24px] ${ui}`}>
      <svg width="6" height="10" viewBox="0 0 6 10" className="ml-[27px] mt-[8px] shrink-0"><path d="M6 0v10L0 5z" fill="#c0c0c0" /></svg>
      <svg width="6" height="10" viewBox="0 0 6 10" className="ml-[23px] mt-[8px] shrink-0"><path d="M0 0v10l6-5z" fill="#217346" /></svg>
      <div className="ml-[41px] mt-[1px] h-[21px] w-px bg-[#a6a6a6]" />
      <div className="flex h-[22px] w-[108px] items-center justify-center pb-[3px] text-[16.3px] text-[#666]">Disclaimer</div>
      <div className="mt-[1px] h-[21px] w-px bg-[#a6a6a6]" />
      <div className="ml-[1px] flex h-[23px] w-[272px] items-center justify-center bg-[#44546a] pb-[3px] text-white">CASE 1 - Safe conv before Seed</div>
      <div className="ml-[3px] flex h-[25px] w-[262px] items-center justify-center border-b-2 border-[#217346] bg-gradient-to-b from-white to-[#c8c8c8] pb-[3px] font-bold text-[#217346]">CASE 2 - Safe conv after Seed</div>
      <div className="ml-[3px] flex h-[23px] w-[231px] items-center justify-center bg-[#44546a] pb-[3px] text-white">CASE 3 - Hybrid Safe conv</div>
      <div className="ml-[2px] mt-[1px] h-[21px] w-px bg-[#a6a6a6]" />
      <div className="ml-[2px] flex h-[23px] w-[88px] items-center justify-center bg-[#44546a] pb-[3px] text-white">CASE 4 -</div>
      <div className="ml-[8px] w-[14px] text-[15px] font-bold leading-[24px] text-[#217346]">...</div>
      <div className="ml-[11px] mt-[2px] flex h-[20px] w-[20px] items-center justify-center rounded-full border border-[#888]">
        <svg width="12" height="12" viewBox="0 0 12 12"><path d="M6 0v12M0 6h12" stroke="#666" /></svg>
      </div>
      <div className="ml-[18px] mt-[4px] flex flex-col gap-[3px]">
        <div className="h-[3px] w-[3px] bg-[#b0b0b0]" />
        <div className="h-[3px] w-[3px] bg-[#b0b0b0]" />
        <div className="h-[3px] w-[3px] bg-[#b0b0b0]" />
      </div>
      <div className="ml-[16px] mt-[3px] flex h-[18px] w-[726px] shrink-0">
        <div className="flex w-[18px] items-center justify-center border border-[#b0b0b0] bg-white">
          <svg width="5" height="10" viewBox="0 0 5 10"><path d="M5 0v10L0 5z" fill="#666" /></svg>
        </div>
        <div className="flex-1 border-y border-r border-[#b0b0b0] bg-white" />
        <div className="w-[28px] bg-[#dcdcdc]" />
        <div className="flex w-[18px] items-center justify-center border border-[#b0b0b0] bg-white">
          <svg width="5" height="10" viewBox="0 0 5 10"><path d="M0 0v10l5-5z" fill="#666" /></svg>
        </div>
      </div>
    </div>
  );
}

function StatusBar() {
  return (
    <div className={`flex h-[25px] shrink-0 items-center border-t-2 border-[#c6c6c6] bg-[#f1f1f1] text-[12px] text-[#444] ${ui}`}>
      <span className="ml-[9px]">Calculate</span>
      <svg width="15" height="15" viewBox="0 0 15 15" className="ml-[28px]">
        <rect x=".5" y="2.500" width="13" height="12" fill="#fff" stroke="#666" />
        <rect x="3" y="0" width="11" height="5" fill="#666" />
        <circle cx="2.500" cy="2.500" r="2.500" fill="#444" />
        <path d="M3 8h9M3 10.500h9M3 13h9" stroke="#666" strokeDasharray="1.500 1" />
      </svg>
      <div className="ml-auto flex h-full w-[48px] items-center justify-center bg-[#c6c6c6]">
        <svg width="16" height="16" viewBox="0 0 16 16"><path d="M.5.5h15v15H.5zM5.500.5v15M10.500.5v15M.5 5.500h15M.5 10.500h15" fill="none" stroke="#666" /></svg>
      </div>
      <svg width="17" height="16" viewBox="0 0 17 16" className="ml-[15px]">
        <path d="M.5.5h16v15H.5zM3.500 3h10v10h-10zM5.500 5.500h6M5.500 8h6M5.500 10.500h6" fill="none" stroke="#666" />
      </svg>
      <svg width="17" height="16" viewBox="0 0 17 16" className="ml-[31px]">
        <path d="M.5.5h16v15H.5zM.5 10.500h10V.5M5.500.5v10" fill="none" stroke="#666" />
      </svg>
      <div className="ml-[20px] h-[2px] w-[11px] bg-[#666]" />
      <div className="relative ml-[4px] flex h-[15px] w-[125px] items-center">
        <div className="h-px w-full bg-[#a6a6a6]" />
        <div className="absolute left-[62px] h-[7px] w-px bg-[#a6a6a6]" />
        <div className="absolute left-[47px] h-[14px] w-[6px] bg-[#777]" />
      </div>
      <svg width="11" height="11" viewBox="0 0 11 11" className="ml-[3px]"><path d="M5.500 0v11M0 5.500h11" stroke="#666" strokeWidth="1.600" /></svg>
      <span className="ml-[14px] mr-[18px]">80%</span>
    </div>
  );
}

export default function App() {
  return (
    <div className={`flex h-[983px] w-[1920px] flex-col overflow-hidden ${ui}`}>
      <TitleBar />
      <Ribbon />
      <FormulaBar />
      <Sheet />
      <TabBar />
      <StatusBar />
    </div>
  );
}
